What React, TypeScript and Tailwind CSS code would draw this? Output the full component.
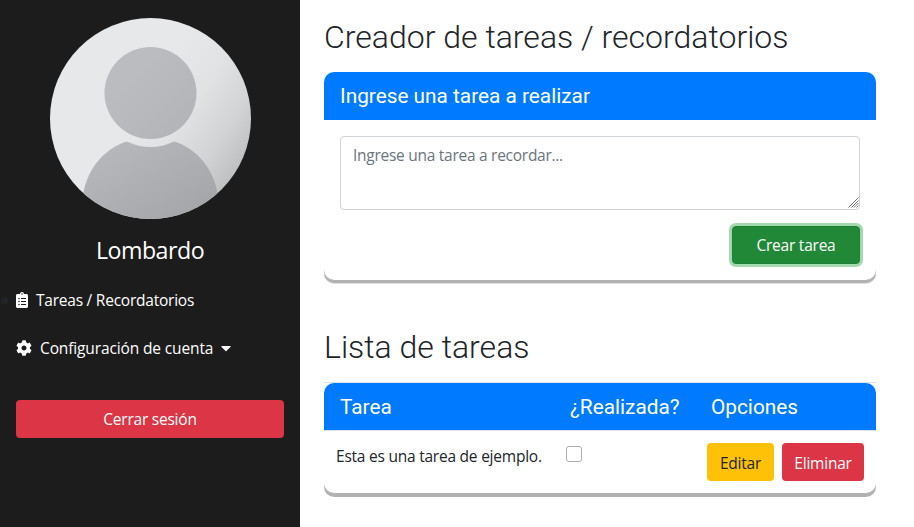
import { FaCaretDown, FaClipboardList, FaCog } from "react-icons/fa";

function Avatar() {
  return (
    <svg className="mx-auto block size-[201px]" viewBox="0 0 201 201">
      <defs>
        <linearGradient id="back" x1="0" y1="0" x2="1" y2="0.7">
          <stop offset="0.5" stopColor="#e7e8ea" />
          <stop offset="0.68" stopColor="#e1e2e3" />
          <stop offset="0.85" stopColor="#d2d3d4" />
          <stop offset="1" stopColor="#bcbdbf" />
        </linearGradient>
        <linearGradient id="head" x1="0" y1="0" x2="1" y2="1">
          <stop offset="0.3" stopColor="#bbbcc0" />
          <stop offset="1" stopColor="#b2b3b6" />
        </linearGradient>
        <linearGradient id="body" x1="0" y1="0" x2="1" y2="1">
          <stop offset="0" stopColor="#babbbf" />
          <stop offset="1" stopColor="#a2a3a5" />
        </linearGradient>
        <clipPath id="round">
          <circle cx="100.5" cy="100.5" r="100.5" />
        </clipPath>
      </defs>
      <g clipPath="url(#round)">
        <rect width="201" height="201" fill="url(#back)" />
        <circle cx="100.5" cy="75" r="46" fill="url(#head)" />
        <path d="M32 201V190C32 156 52 131 77 123.500Q100.500 134.500 124 123.500C149 131 169 156 169 190V201Z" fill="url(#body)" />
      </g>
    </svg>
  );
}

function Sidebar() {
  return (
    <aside className="w-[300px] shrink-0 bg-[#1c1c1c] px-4 pt-[18px] text-white">
      <div className="pl-px"><Avatar /></div>
      <h2 className="mt-[17px] text-center text-[23.2px] leading-[29px] tracking-[-0.5px]">Lombardo</h2>
      <nav className="mt-[23px]">
        <a className="flex h-6 items-center">
          <span className="-ml-[15px] mr-2 size-[7px] rounded-full bg-[#212529]" />
          <FaClipboardList className="mr-2 h-4 w-3" />
          <span className="whitespace-nowrap">Tareas / Recordatorios</span>
        </a>
        <a className="mt-6 flex h-6 items-center">
          <FaCog className="mr-2 size-4" />
          <span className="whitespace-nowrap tracking-[-0.13px]">Configuración de cuenta</span>
          <FaCaretDown className="ml-[7px] h-4 w-[12px]" />
        </a>
      </nav>
      <button className="mt-10 h-[38px] w-full rounded bg-[#dc3545]">Cerrar sesión</button>
    </aside>
  );
}

export default function App() {
  return (
    <div className="flex h-[527px] w-[914px] overflow-hidden bg-white font-['Open_Sans',sans-serif] text-[15.5px] leading-6 tracking-[-0.23px] text-[#212529]">
      <Sidebar />
      <main className="w-[576px] pl-6 pt-[18px]">
        <h1 className="whitespace-nowrap font-[Roboto,sans-serif] text-[32px] font-light leading-[38px] tracking-normal">Creador de tareas / recordatorios</h1>
        <section className="mt-4 h-[208px] rounded-[10px] shadow-[0_3px_0_#b2b2b2,0_4px_0_#e0e0e0]">
          <h2 className="h-12 rounded-t-[10px] bg-[#007bff] px-4 font-[Roboto,sans-serif] text-[20.8px] leading-[48px] tracking-normal text-white">Ingrese una tarea a realizar</h2>
          <div className="flex flex-col px-4 pt-4">
            <div className="relative h-[74px]">
              <textarea className="block h-[74px] w-full resize-none rounded border border-[#ced4da] px-3 py-[6px] tracking-[-0.27px] placeholder:text-[#6c757d]" placeholder="Ingrese una tarea a recordar..." />
              <svg className="pointer-events-none absolute bottom-[2px] right-[1px] size-[11px]" viewBox="0 0 11 11" fill="none" stroke="#666" strokeWidth="0.9">
                <path d="M0.500 10.500L10.500 0.500M3.500 10.500L10.500 3.500M6 10.500L10.500 6M8.500 10.500L10.500 8.500" />
              </svg>
            </div>
            <button className="mt-4 h-[38px] w-32 self-end rounded border border-[#1e7e34] bg-[#218838] text-white shadow-[0_0_0_3px_#a2d9af]">Crear tarea</button>
          </div>
        </section>
        <h1 className="mt-12 font-[Roboto,sans-serif] text-[32px] font-light leading-[38px] tracking-normal">Lista de tareas</h1>
        <section className="mt-4 h-[111px] rounded-b-[10px] border-t border-[#dee2e6] shadow-[0_4px_0_#b2b2b2]">
          <div className="grid h-12 grid-cols-[230px_141px_1fr] rounded-t-[10px] border-b border-[#dee2e6] bg-[#007bff] font-[Roboto,sans-serif] text-[20.8px] leading-[48px] tracking-normal text-white">
            <span className="pl-4">Tarea</span>
            <span className="pl-4">¿Realizada?</span>
            <span className="pl-4">Opciones</span>
          </div>
          <div className="grid grid-cols-[230px_141px_1fr] pt-3">
            <span className="whitespace-nowrap pl-3 leading-[26px]">Esta es una tarea de ejemplo.</span>
            <span className="pl-3 pt-[3px]"><input type="checkbox" className="block size-4 appearance-none rounded-[3px] border border-[#adadad] bg-white" /></span>
            <span className="flex gap-2 pl-3">
              <button className="h-[38px] w-[67px] rounded bg-[#ffc107] pt-[2px]">Editar</button>
              <button className="h-[38px] w-[82px] rounded bg-[#dc3545] pt-[2px] text-white">Eliminar</button>
            </span>
          </div>
        </section>
      </main>
    </div>
  );
}
